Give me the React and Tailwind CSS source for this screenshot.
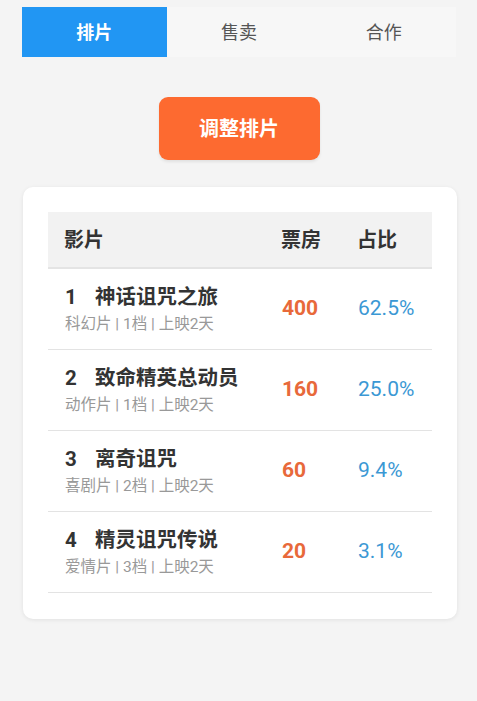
import React from "react";

const rows = [
  { n: 1, name: "神话诅咒之旅", sub: "科幻片 | 1档 | 上映2天", box: "400", ratio: "62.5%" },
  { n: 2, name: "致命精英总动员", sub: "动作片 | 1档 | 上映2天", box: "160", ratio: "25.0%" },
  { n: 3, name: "离奇诅咒", sub: "喜剧片 | 2档 | 上映2天", box: "60", ratio: "9.4%" },
  { n: 4, name: "精灵诅咒传说", sub: "爱情片 | 3档 | 上映2天", box: "20", ratio: "3.1%" },
];

export default function App() {
  return (
    <div
      className="min-h-screen w-[477px] bg-[#f4f4f4]"
      style={{ fontFamily: '"Roboto", "Noto Sans CJK SC", sans-serif' }}
    >
      <div className="pt-[7px] px-[22px]">
        <div className="flex h-[50px] w-[434px] bg-[#f7f7f7]">
          <div className="flex w-[145px] items-center justify-center bg-[#2196f3] text-[18px] font-bold text-white">
            排片
          </div>
          <div className="flex w-[145px] items-center justify-center text-[18px] text-[#555]">
            售卖
          </div>
          <div className="flex w-[145px] items-center justify-center text-[18px] text-[#555]">
            合作
          </div>
        </div>
      </div>

      <div className="flex justify-center pt-[40px]">
        <button className="ml-[1px] flex h-[63px] w-[161px] items-center justify-center rounded-[9px] bg-[#fd6a30] text-[20px] font-bold text-white shadow-[0_2px_3px_rgba(0,0,0,0.08)]">
          调整排片
        </button>
      </div>

      <div className="mx-[23px] mt-[27px] w-[434px] rounded-[10px] bg-white px-[25px] pt-[25px] pb-[26px] shadow-[0_1px_4px_rgba(0,0,0,0.08)]">
        <div className="grid h-[57px] grid-cols-[226px_76px_82px] items-center border-b-2 border-[#e4e4e4] bg-[#f2f2f2] text-[20px] font-bold text-[#333]">
          <div className="pl-[16px]">影片</div>
          <div className="pl-[7px]">票房</div>
          <div className="pl-[7px]">占比</div>
        </div>
        {rows.map((r) => (
          <div
            key={r.n}
            className="grid h-[81px] grid-cols-[226px_76px_82px] items-center border-b border-[#e3e3e3]"
          >
            <div className="flex flex-col gap-[4px] pl-[17px]">
              <div className="flex text-[20.5px] leading-[26px] font-bold text-[#333]">
                <span className="w-[30px]">{r.n}</span>
                <span>{r.name}</span>
              </div>
              <div className="text-[15.5px] leading-[20px] text-[#999]">{r.sub}</div>
            </div>
            <div className="pl-[8px] text-[21px] font-bold text-[#e8693a]">{r.box}</div>
            <div className="pl-[8px] text-[21px] text-[#3b98d4]">{r.ratio}</div>
          </div>
        ))}
      </div>
    </div>
  );
}
